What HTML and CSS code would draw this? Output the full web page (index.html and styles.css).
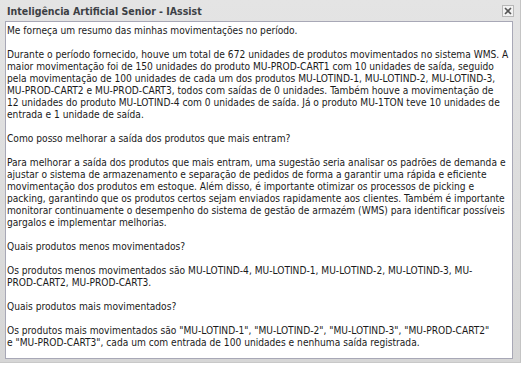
FILE: index.html
```html
<!DOCTYPE html>
<html lang="pt-BR">
<head>
<meta charset="utf-8">
<title>IAssist</title>
<link rel="stylesheet" href="styles.css">
</head>
<body>
<div class="window">
  <div class="titlebar">
    <span class="title">Inteligência Artificial Senior - IAssist</span>
    <span class="close" title="Fechar">
      <svg width="8" height="8" viewBox="0 0 8 8"><path d="M1 1 L7 7 M7 1 L1 7" stroke="#555" stroke-width="1.6" fill="none"/></svg>
    </span>
  </div>
  <div class="content">
    <p>Me forneça um resumo das minhas movimentações no período.</p>
    <p>Durante o período fornecido, houve um total de 672 unidades de produtos movimentados no sistema WMS. A maior movimentação foi de 150 unidades do produto MU-PROD-CART1 com 10 unidades de saída, seguido pela movimentação de 100 unidades de cada um dos produtos MU-LOTIND-1, MU-LOTIND-2, MU-LOTIND-3, MU-PROD-CART2 e MU-PROD-CART3, todos com saídas de 0 unidades. Também houve a movimentação de 12&nbsp;unidades do produto MU-LOTIND-4 com 0 unidades de saída. Já o produto MU-1TON teve 10 unidades de entrada e 1 unidade de saída.</p>
    <p>Como posso melhorar a saída dos produtos que mais entram?</p>
    <p>Para melhorar a saída dos produtos que mais entram, uma sugestão seria analisar os padrões de demanda e ajustar o sistema de armazenamento e separação de pedidos de forma a garantir uma rápida e eficiente movimentação dos produtos em estoque. Além disso, é importante otimizar os processos de picking e packing, garantindo que os produtos certos sejam enviados rapidamente aos clientes. Também é importante monitorar continuamente o desempenho do sistema de gestão de armazém (WMS) para identificar possíveis gargalos e implementar melhorias.</p>
    <p>Quais produtos menos movimentados?</p>
    <p>Os produtos menos movimentados são MU-LOTIND-4, MU-LOTIND-1, MU-LOTIND-2, MU-LOTIND-3, MU-<span class="nw">PROD-CART2,</span> MU-PROD-CART3.</p>
    <p>Quais produtos mais movimentados?</p>
    <p>Os produtos mais movimentados são "MU-LOTIND-1", "MU-LOTIND-2", "MU-LOTIND-3", "MU-PROD-CART2" <span class="nw">e "MU-PROD-CART3",</span> cada um com entrada de 100 unidades e nenhuma saída registrada.</p>
  </div>
</div>
</body>
</html>
```
FILE: styles.css
```css
html, body {
  margin: 0;
  padding: 0;
  background: #ffffff;
}

.window {
  box-sizing: border-box;
  width: 521px;
  height: 363px;
  display: flex;
  flex-direction: column;
  padding: 0 7px 3px 5px;
  background: linear-gradient(#e4e4e4, #d6d6d6);
  border-right: 1px solid #c4c4c4;
  border-bottom: 1px solid #c8c8c8;
}

.titlebar {
  height: 21px;
  flex: none;
  display: flex;
  align-items: center;
  justify-content: space-between;
  padding-left: 2px;
}

.title {
  font-family: "DejaVu Sans Condensed", "Liberation Sans", sans-serif;
  font-weight: bold;
  font-size: 10.5px;
  color: #3c3f44;
}

.close {
  box-sizing: border-box;
  width: 12px;
  height: 12px;
  display: flex;
  align-items: center;
  justify-content: center;
  border: 1px solid #b8b8b8;
  background: #f2f2f2;
  margin-right: -1px;
}

.content {
  flex: 1;
  min-height: 0;
  overflow: hidden;
  background: #ffffff;
  border: 1px solid #a8a8b6;
  padding: 3px 1px 0 1px;
  font-family: "DejaVu Sans Condensed", "Liberation Sans", sans-serif;
  font-size: 10.15px;
  line-height: 12px;
  color: #1a1a1a;
}

.content p {
  margin: 0 0 12px 0;
}

.nw {
  display: inline-block;
  white-space: nowrap;
}
```
